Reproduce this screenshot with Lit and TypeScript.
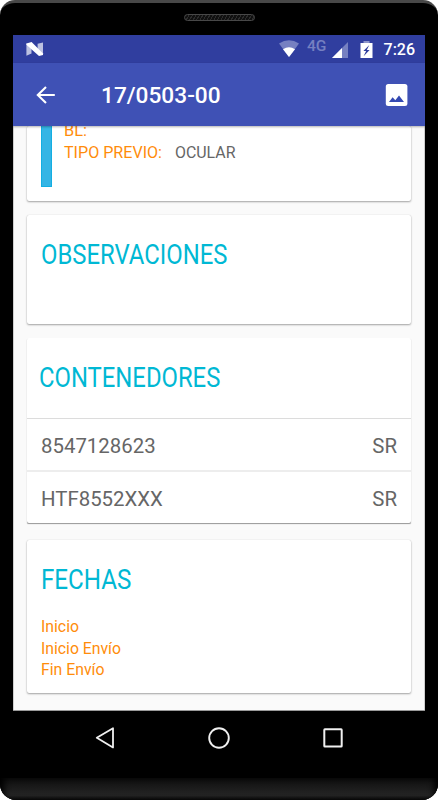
import { LitElement, html, css, svg } from "lit";
import { customElement, property } from "lit/decorators.js";

/** A single line of Roboto set to an exact measure. */
@customElement("fit-text")
class FitText extends LitElement {
  @property({ type: String }) text = "";
  @property({ type: Number }) measure = 100;
  @property({ type: Number }) size = 16;
  @property({ type: Number }) weight = 400;
  static styles = css`
    :host { display: block; line-height: 0; flex: none; }
    svg { display: block; overflow: visible; }
    text { fill: currentColor; font-family: Roboto, "Liberation Sans", sans-serif; }
  `;
  render() {
    const h = Math.round(this.size * 0.72);
    return html`<svg width=${this.measure} height=${h}>
      ${svg`<text x="0" y=${h} font-size=${this.size} font-weight=${this.weight} textLength=${this.measure} lengthAdjust="spacingAndGlyphs">${this.text}</text>`}
    </svg>`;
  }
}

@customElement("app-root")
class AppRoot extends LitElement {
  static styles = css`
    :host {
      display: block;
      width: 438px;
      height: 800px;
      background: #fff;
      font-family: Roboto, "Liberation Sans", sans-serif;
    }
    * { box-sizing: border-box; }
    svg { display: block; flex: none; }
    .phone {
      display: flex;
      flex-direction: column;
      width: 438px;
      height: 800px;
      background: #000;
      border-top: 3px solid #484848;
      border-radius: 15px 15px 16px 16px;
      overflow: hidden;
    }
    .ear { height: 32px; display: flex; justify-content: center; padding-top: 11px; }
    .speaker {
      width: 71px;
      height: 7px;
      border: 1px solid #484848;
      border-radius: 4px;
      background: repeating-linear-gradient(120deg, #2c2c2c 0 1px, #101010 1px 3px);
    }
    .screen {
      width: 412px;
      height: 676px;
      margin-left: 13px;
      display: flex;
      flex-direction: column;
      background: #fafafa;
      border-bottom: 1px solid #9a9a9a;
      flex: none;
    }
    .status {
      height: 28px;
      flex: none;
      display: flex;
      align-items: center;
      background: #303e9f;
      color: #fff;
      padding: 0 10px 0 12.6px;
    }
    .grow { flex: 1; }
    .bar {
      height: 63px;
      flex: none;
      display: flex;
      align-items: center;
      background: #3f51b5;
      color: #fff;
      padding: 0 17px 0 20px;
      box-shadow: 0 1px 2px rgba(0, 0, 0, 0.3);
      z-index: 1;
    }
    .title { margin-left: 43.6px; }
    .content { flex: 1; overflow: hidden; padding: 0 13px; min-height: 0; border: 1px solid #cfcfcf; border-width: 0 1px; }
    .card {
      background: #fff;
      border-radius: 2px;
      box-shadow: 0 1px 2px rgba(0, 0, 0, 0.34), 0 0 1px rgba(0, 0, 0, 0.18);
      width: 384px;
    }
    .first { height: 75px; display: flex; margin-bottom: 14px; }
    .stripe { width: 11px; height: 61px; margin-left: 14px; background: #35b5e5; border: 1px solid #13aee2; border-top: 0; }
    .fields { margin-left: 12px; margin-top: -7px; }
    .field { display: flex; height: 22px; align-items: center; color: #ff8c0a; }
    .value { color: #666; margin-left: 13px; }
    .head { color: #00b8d4; }
    .obs { height: 109px; margin-bottom: 14px; padding: 29px 0 0 14px; }
    .list { height: 185px; margin-bottom: 17px; box-shadow: 0 1px 1px -0.5px rgba(0, 0, 0, 0.4); }
    .list .head { height: 81px; padding: 29px 0 0 12px; border-bottom: 1px solid #dcdcdc; }
    .row {
      height: 52px;
      padding: 2px 14px 0 14px;
      display: flex;
      justify-content: space-between;
      align-items: center;
      font-size: 20.4px;
      color: #666;
    }
    .row.line { height: 53px; border-bottom: 2px solid #ededed; padding-top: 2px; }
    .dates { height: 153px; padding: 29px 0 0 14px; }
    .dates .items { margin: 31px 0 0 0; display: grid; grid-auto-rows: 21.7px; color: #ff8c0a; }
    .nav { height: 67px; flex: none; display: flex; align-items: center; padding-left: 95px; gap: 93px; padding-bottom: 13px; }
    .chin {
      flex: 1;
      background: linear-gradient(#0d0d0d, #262626 80%, #151515);
      box-shadow: inset 6px -2px 6px -2px #000, inset -6px 0 6px -2px #000;
    }
  `;

  render() {
    const dates: [string, number][] = [["Inicio", 38], ["Inicio Envío", 80], ["Fin Envío", 63.5]];
    return html`<div class="phone">
      <div class="ear"><div class="speaker"></div></div>
      <div class="screen">
        <div class="status">
          <svg width="18" height="14" viewBox="0 0 18 14">
            <path d="M.4 1.4 5.5 3V11.5L.4 13.8ZM11.6 1.8 17 .6V13L11.6 11Z" fill="#bcc1e1" />
            <path d="M.4 1.6 5.6 0 17 11.6V13L13 14 .4 2.8Z" fill="#fff" />
          </svg>
          <div class="grow"></div>
          <svg width="136" height="28" viewBox="0 0 136 28" font-family="Roboto, sans-serif">
            <path d="M0 8.6Q10 2 20 8.6L10 22Z" fill="#7680c1" />
            <path d="M4 14.2Q10 10.4 16 14.2L10 22Z" fill="#fff" />
            <text x="28" y="15.7" font-size="14.6" font-weight="500" fill="#7680c1" textLength="19.5" lengthAdjust="spacingAndGlyphs">4G</text>
            <path d="M69 7V23H53Z" fill="#7680c1" />
            <path d="M63 13V23H53Z" fill="#fff" />
            <path d="M84.5 6h6v3h-6Z" fill="#8d95cb" />
            <path d="M81.5 8h12v15h-12Z" fill="#fff" />
            <path d="M90.3 10 84.4 16h2.7l-2.5 5.2 6-6.2h-2.8Z" fill="#303e9f" />
            <text x="104.6" y="20.2" font-size="16" font-weight="500" fill="#fff" textLength="31.4">7:26</text>
          </svg>
        </div>
        <div class="bar">
          <svg width="24" height="24" viewBox="0 0 24 24">
            <path d="M21.8 12H5M13 3.9 4.8 12l8.2 8.1" fill="none" stroke="#fff" stroke-width="2.1" />
          </svg>
          <fit-text class="title" text="17/0503-00" measure="119.6" size="22.4" weight="500"></fit-text>
          <div class="grow"></div>
          <svg width="23" height="22" viewBox="0 0 23 22">
            <rect x=".8" y="0" width="21.6" height="22" rx="2.5" fill="#fff" />
            <path d="M4 18 7.6 13.2 10.3 16.3 14 11.5 19 18Z" fill="#3449b2" />
          </svg>
        </div>
        <div class="content">
          <div class="card first">
            <div class="stripe"></div>
            <div class="fields">
              <div class="field"><fit-text text="BL:" measure="23" size="16"></fit-text></div>
              <div class="field">
                <fit-text text="TIPO PREVIO:" measure="98" size="16"></fit-text>
                <fit-text class="value" text="OCULAR" measure="60.5" size="16"></fit-text>
              </div>
            </div>
          </div>
          <div class="card obs"><fit-text class="head" text="OBSERVACIONES" measure="186.5" size="27.2"></fit-text></div>
          <div class="card list">
            <div class="head"><fit-text text="CONTENEDORES" measure="181.3" size="27.2"></fit-text></div>
            <div class="row line"><span>8547128623</span><span>SR</span></div>
            <div class="row"><span>HTF8552XXX</span><span>SR</span></div>
          </div>
          <div class="card dates">
            <fit-text class="head" text="FECHAS" measure="90.5" size="27.2"></fit-text>
            <div class="items">${dates.map(([d, w]) => html`<fit-text text=${d} measure=${w} size="16"></fit-text>`)}</div>
          </div>
        </div>
      </div>
      <div class="nav">
        <svg width="20" height="22" viewBox="0 0 20 22"><path d="M18 1.2V20.4L1.8 10.8Z" fill="none" stroke="#f0f0f0" stroke-width="1.8" stroke-linejoin="round" /></svg>
        <svg width="22" height="22" viewBox="0 0 22 22"><circle cx="11" cy="11" r="9.8" fill="none" stroke="#f0f0f0" stroke-width="1.9" /></svg>
        <svg width="20" height="20" viewBox="0 0 20 20"><rect x="1.3" y="1.3" width="17.4" height="17.2" rx=".6" fill="none" stroke="#f0f0f0" stroke-width="2" /></svg>
      </div>
      <div class="chin"></div>
    </div>`;
  }
}
